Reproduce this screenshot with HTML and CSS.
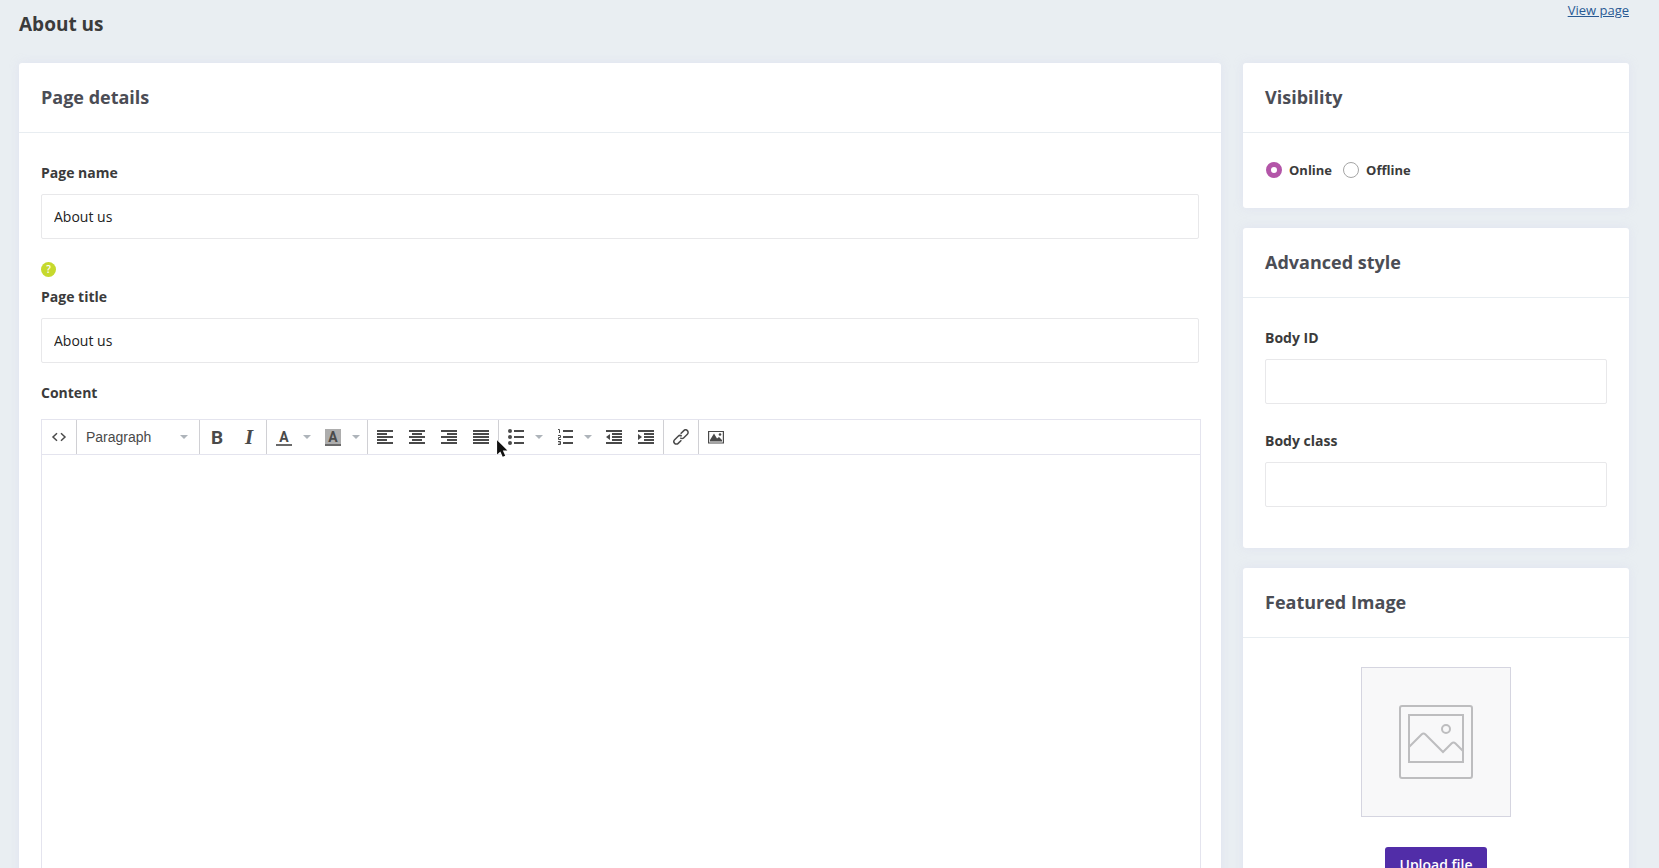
FILE: index.html
```
<!doctype html>
<html lang="en">
    <head>
        <meta charset="utf-8">
        <title>About us</title>
        <link rel="stylesheet" href="styles.css">
    </head>
    <body>
        <div class="page">
            <header class="page-header">
                <h1>About us</h1>
                <a class="view-page" href="#">View page</a>
            </header>
            <form class="row">
                <main class="col-main">
                    <section class="card card-main">
                        <h2 class="card-title">Page details</h2>
                        <div class="card-body">
                            <div class="field">
                                <label for="page-name">Page name</label>
                                <input type="text" id="page-name" value="About us">
                            </div>
                            <div class="field">
                                <button type="button" class="help">?</button>
                                <label for="page-title">Page title</label>
                                <input type="text" id="page-title" value="About us">
                            </div>
                            <div class="field">
                                <label for="content">Content</label>
                                <div class="editor">
                                    <div class="toolbar">
                                        <div class="group">
                                            <button type="button" class="tool" aria-label="Source code">
                                                <svg viewBox="0 0 16 16"><path d="M6 4.2L2 8l4 3.8M10 4.2L14 8l-4 3.8" fill="none" stroke="#4a4a4a" stroke-width="1.5"/></svg>
                                            </button>
                                        </div>
                                        <div class="group">
                                            <div class="format">
                                                <select aria-label="Format">
                                                    <option>Paragraph</option>
                                                </select>
                                            </div>
                                        </div>
                                        <div class="group">
                                            <button type="button" class="tool bold" aria-label="Bold">B</button>
                                            <button type="button" class="tool italic" aria-label="Italic">I</button>
                                        </div>
                                        <div class="group">
                                            <button type="button" class="tool" aria-label="Text color"><span class="color">A</span></button>
                                            <button type="button" class="caret" aria-label="Choose text color"></button>
                                            <button type="button" class="tool" aria-label="Background color"><span class="color color-back">A</span></button>
                                            <button type="button" class="caret" aria-label="Choose background color"></button>
                                        </div>
                                        <div class="group">
                                            <button type="button" class="tool" aria-label="Align left">
                                                <svg viewBox="0 0 16 16"><path d="M0 1h16v2H0zM0 4h10v2H0zM0 7h16v2H0zM0 10h10v2H0zM0 13h16v2H0z"/></svg>
                                            </button>
                                            <button type="button" class="tool" aria-label="Align center">
                                                <svg viewBox="0 0 16 16"><path d="M0 1h16v2H0zM3 4h10v2H3zM0 7h16v2H0zM3 10h10v2H3zM0 13h16v2H0z"/></svg>
                                            </button>
                                            <button type="button" class="tool" aria-label="Align right">
                                                <svg viewBox="0 0 16 16"><path d="M0 1h16v2H0zM6 4h10v2H6zM0 7h16v2H0zM6 10h10v2H6zM0 13h16v2H0z"/></svg>
                                            </button>
                                            <button type="button" class="tool" aria-label="Justify">
                                                <svg viewBox="0 0 16 16"><path d="M0 1h16v2H0zM0 4h16v2H0zM0 7h16v2H0zM0 10h16v2H0zM0 13h16v2H0z"/></svg>
                                            </button>
                                        </div>
                                        <div class="group">
                                            <button type="button" class="tool" aria-label="Bullet list">
                                                <svg viewBox="0 0 16 16"><path d="M6 1h10v2H6zM6 7h10v2H6zM6 13h10v2H6z"/><circle cx="2" cy="2" r="2"/><circle cx="2" cy="8" r="2"/><circle cx="2" cy="14" r="2"/></svg>
                                            </button>
                                            <button type="button" class="caret" aria-label="Bullet list styles"></button>
                                            <button type="button" class="tool" aria-label="Numbered list">
                                                <svg viewBox="0 0 16 16"><path d="M6 1h10v2H6zM6 7h10v2H6zM6 13h10v2H6z"/><g fill="none" stroke="#4a4a4a"><path d="M1 .5h1.500V4"/><path d="M1 6.500h2.500V8.500H1.500V10.500H4"/><path d="M1 12.500h2.500v3H1M1.500 14h2"/></g></svg>
                                            </button>
                                            <button type="button" class="caret" aria-label="Numbered list styles"></button>
                                            <button type="button" class="tool" aria-label="Decrease indent">
                                                <svg viewBox="0 0 16 16"><path d="M0 1h16v2H0zM6 4h10v2H6zM6 7h10v2H6zM6 10h10v2H6zM0 13h16v2H0zM4 5v6L0 8z"/></svg>
                                            </button>
                                            <button type="button" class="tool" aria-label="Increase indent">
                                                <svg viewBox="0 0 16 16"><path d="M0 1h16v2H0zM6 4h10v2H6zM6 7h10v2H6zM6 10h10v2H6zM0 13h16v2H0zM0 5v6l4-3z"/></svg>
                                            </button>
                                        </div>
                                        <div class="group">
                                            <button type="button" class="tool" aria-label="Insert link">
                                                <svg viewBox="0 0 16 16"><g transform="rotate(-45 8 8)" fill="none" stroke="#4a4a4a" stroke-width="1.5"><path d="M6 10.500H1.500A2.500 2.500 0 0 1 1.500 5.500H6.500A2.500 2.500 0 0 1 9 8"/><path d="M10 5.500h4.500a2.500 2.500 0 0 1 0 5h-5A2.500 2.500 0 0 1 7 8"/></g></svg>
                                            </button>
                                        </div>
                                        <div class="group">
                                            <button type="button" class="tool" aria-label="Insert image">
                                                <svg viewBox="0 0 16 16"><path d="M.6 2.500h14.800v11.500H.6z" fill="none" stroke="#4a4a4a" stroke-width="1.200"/><path d="M2 12.500V11l4-6.500 3 5 2-1.500 3 3v1.500z"/><circle cx="12" cy="5.500" r="1.300"/></svg>
                                            </button>
                                        </div>
                                    </div>
                                    <textarea id="content"></textarea>
                                    <svg class="pointer" viewBox="0 0 12 18"><path d="M1 1v13l3-2.800 2.200 5 2.300-1-2.200-4.800H10.500z" fill="#111" stroke="#fff" paint-order="stroke"/></svg>
                                </div>
                            </div>
                        </div>
                    </section>
                </main>
                <aside class="col-side">
                    <section class="card">
                        <h2 class="card-title">Visibility</h2>
                        <div class="card-body radios">
                            <label><input type="radio" name="visibility" checked>Online</label>
                            <label><input type="radio" name="visibility">Offline</label>
                        </div>
                    </section>
                    <section class="card">
                        <h2 class="card-title">Advanced style</h2>
                        <div class="card-body">
                            <div class="field">
                                <label for="body-id">Body ID</label>
                                <input type="text" id="body-id">
                            </div>
                            <div class="field">
                                <label for="body-class">Body class</label>
                                <input type="text" id="body-class">
                            </div>
                        </div>
                    </section>
                    <section class="card">
                        <h2 class="card-title">Featured Image</h2>
                        <div class="card-body featured">
                            <div class="placeholder">
                                <svg viewBox="0 0 74 74" fill="none" stroke="#bdbdbf" stroke-width="2"><rect x="1" y="1" width="72" height="72" rx="2"/><path d="M10 10h54v47H10z"/><circle cx="47" cy="24" r="4"/><path d="M10 42l12.500-12.500q2-2 4 0L44 47l8.500-8.500q2-2 4 0L64 46"/></svg>
                            </div>
                            <button type="button" class="upload">Upload file</button>
                        </div>
                    </section>
                </aside>
            </form>
        </div>
    </body>
</html>
```

FILE: styles.css
```
* {
    box-sizing: border-box;
}
body {
    margin: 0;
    background-color: #e9eef2;
    color: #3b3b3b;
    font-family: "Open Sans", sans-serif;
    font-size: 14px;
    line-height: 20px;
}
button, input, select, textarea {
    margin: 0;
    font: inherit;
    color: inherit;
}
button {
    border: 0;
    padding: 0;
    background: none;
}
.page {
    height: 100vh;
    overflow: hidden;
    padding: 0 19px 0 8px;
}
.page-header {
    display: flex;
    justify-content: space-between;
    align-items: flex-start;
    height: 63px;
    padding: 0 11px;
}
h1 {
    margin: 12px 0 0;
    font-size: 19px;
    line-height: 24px;
}
.view-page {
    color: #2a5a94;
    font-size: 13px;
}

/* Columns */
.row {
    display: flex;
    align-items: flex-start;
}
.col-main, .col-side {
    padding: 0 11px;
}
.col-main {
    width: 75%;
}
.col-side {
    width: 25%;
}
.card {
    margin-bottom: 20px;
    background-color: #fff;
    border-radius: 3px;
    box-shadow: 0 0 10px rgba(210, 210, 238, 0.35);
}
.card-title {
    margin: 0;
    padding: 22px 22px 23px;
    border-bottom: 1px solid #e8edf1;
    color: #4b4d55;
    font-size: 18px;
    line-height: 24px;
}
.card-body {
    padding: 30px 22px 14px;
}

/* Fields */
.field {
    margin-bottom: 27px;
}
.card-main .field {
    margin-bottom: 20px;
}
.field label {
    display: block;
    margin-bottom: 11px;
    font-weight: bold;
}
.field input {
    display: block;
    width: 100%;
    height: 45px;
    padding: 0 12px;
    border: 1px solid #e8e8ea;
    border-radius: 2px;
    background-color: #fff;
    color: #222;
}
.help {
    display: block;
    width: 15px;
    height: 15px;
    margin: 23px 0 10px;
    border-radius: 50%;
    background-color: #c6d92d;
    color: #fff;
    font-size: 10px;
    font-weight: 600;
    line-height: 15px;
}

/* Editor */
.editor {
    position: relative;
    box-sizing: content-box;
    width: 100%;
    margin-top: 16px;
    border: 1px solid #e4e4ee;
}
.toolbar {
    display: flex;
    height: 35px;
    border-bottom: 1px solid #e4e4ee;
}
.group {
    display: flex;
    align-items: center;
    padding: 0 1px;
    border-left: 1px solid #d0d0d4;
}
.group:first-child {
    border-left: 0;
}
.tool {
    display: flex;
    justify-content: center;
    align-items: center;
    width: 32px;
    height: 34px;
    color: #4a4a4a;
}
.tool svg {
    width: 16px;
    height: 16px;
    fill: #4a4a4a;
}
.bold {
    font: bold 19px Roboto, sans-serif;
}
.italic {
    font: italic bold 21px "Liberation Serif", serif;
}
.color {
    width: 16px;
    height: 17px;
    border-bottom: 2px solid #6a6a6a;
    font: bold 14px/16px Roboto, sans-serif;
}
.color-back {
    background-color: #adadad;
}
.caret {
    width: 17px;
    height: 34px;
    padding-right: 3px;
}
.caret::after, .format::after {
    content: "";
    display: block;
    margin: 0 auto;
    width: 0;
    border: 4px solid transparent;
    border-top-color: #aeb4ba;
    border-bottom: 0;
}
.format {
    display: flex;
    align-items: center;
    width: 120px;
    padding: 0 10px 0 8px;
}
.format select {
    flex: 1;
    height: 34px;
    padding: 0;
    border: 0;
    appearance: none;
    background: none;
    color: #4a4a4a;
    font-family: "Liberation Sans", Arial, sans-serif;
}
.editor textarea {
    display: block;
    width: 100%;
    height: 500px;
    border: 0;
    resize: none;
    background: none;
}
.pointer {
    position: absolute;
    left: 454px;
    top: 19px;
    width: 13px;
    height: 20px;
}

/* Visibility */
.radios {
    display: flex;
    gap: 10px;
    padding: 27px 22px 28px;
}
.radios label {
    display: flex;
    align-items: center;
    font-size: 13px;
    font-weight: bold;
}
.radios input {
    appearance: none;
    width: 16px;
    height: 16px;
    margin: 0 7px 0 1px;
    border: 1px solid #a5a5a5;
    border-radius: 50%;
    background-color: #fff;
}
.radios input:checked {
    border: 5px solid #b355a8;
}

/* Featured image */
.featured {
    display: flex;
    flex-direction: column;
    align-items: center;
    gap: 30px;
    padding-top: 29px;
}
.placeholder {
    display: flex;
    justify-content: center;
    align-items: center;
    width: 150px;
    height: 150px;
    border: 1px solid #d5d5e0;
    background-color: #f8f8f9;
}
.placeholder svg {
    width: 74px;
    height: 74px;
}
.upload {
    height: 36px;
    padding: 0 15px;
    border-radius: 3px;
    background-color: #512da8;
    color: #fff;
    font-weight: 600;
}
```
